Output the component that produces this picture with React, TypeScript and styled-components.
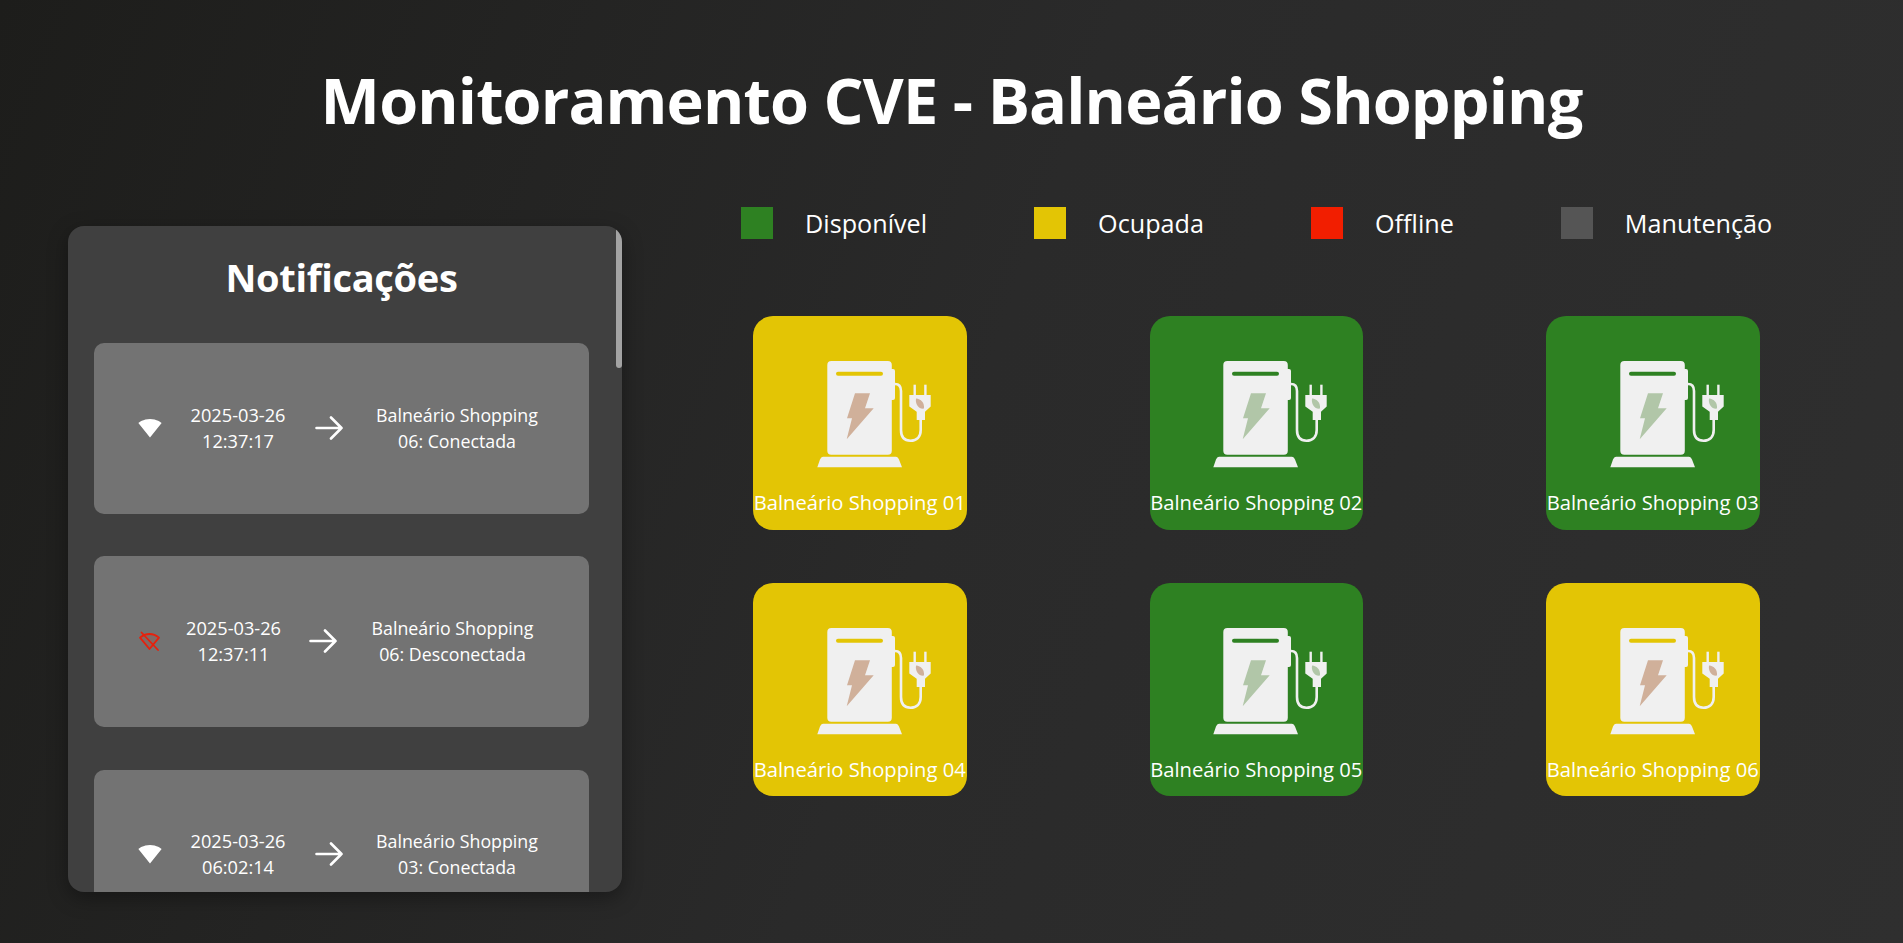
import React from "react";
import styled, { createGlobalStyle } from "styled-components";
import { MdSignalWifi4Bar } from "react-icons/md";

const Global = createGlobalStyle`
  html, body { margin: 0; padding: 0; height: 100%; overflow: hidden; }
  body {
    background: linear-gradient(110deg, #1d1d1b 0%, #2a2a2a 50%, #2f2f2f 100%);
    font-family: "Open Sans", "Noto Sans", sans-serif;
    color: #fff;
  }
`;

const Page = styled.div`
  width: 1903px;
  height: 943px;
  overflow: hidden;
`;

const Title = styled.h1`
  margin: 60px 0 67px;
  height: 80px;
  line-height: 80px;
  font-size: 63px;
  font-weight: 700;
  letter-spacing: -0.88px;
  text-align: center;
  white-space: nowrap;
`;

const Content = styled.div`
  display: flex;
  align-items: flex-start;
  padding-left: 68px;
`;

const Panel = styled.aside`
  position: relative;
  box-sizing: border-box;
  width: 554px;
  height: 666px;
  margin-top: 19px;
  padding-left: 26px;
  background: #404040;
  border-radius: 16px;
  box-shadow: 0 6px 20px rgba(0, 0, 0, 0.35);
  overflow: hidden;
`;

const ScrollThumb = styled.div`
  position: absolute;
  top: 0;
  right: 0;
  width: 6px;
  height: 142px;
  background: #a3a3a3;
  border-radius: 3px;
`;

const PanelTitle = styled.h2`
  margin: 0;
  padding-top: 25px;
  height: 117px;
  box-sizing: border-box;
  line-height: 52px;
  font-size: 38px;
  font-weight: 700;
  letter-spacing: -0.3px;
  text-align: center;
  width: 495px;
`;

const Notice = styled.div`
  display: flex;
  align-items: center;
  width: 495px;
  height: 171px;
  margin-bottom: 42.4px;
  padding: 0 0 2px 44px;
  box-sizing: border-box;
  background: #737373;
  border-radius: 10px;
`;

const SignalSlot = styled.div`
  display: flex;
  width: 24px;
  height: 24px;
  flex: none;
  color: #fff;
`;

const Stamp = styled.div<{ $off?: boolean }>`
  width: 100px;
  margin-left: ${(p) => (p.$off ? 21.5 : 26)}px;
  flex: none;
  font-size: 18.2px;
  line-height: 26px;
  text-align: center;
  white-space: nowrap;
`;

const ArrowIcon = styled.svg<{ $off?: boolean }>`
  width: 28px;
  height: 24px;
  flex: none;
  margin-left: ${(p) => (p.$off ? 25 : 27)}px;
`;

const Message = styled.div<{ $off?: boolean }>`
  width: 170px;
  margin-left: ${(p) => (p.$off ? 31 : 29)}px;
  flex: none;
  font-size: 17.8px;
  line-height: 26px;
  text-align: center;
  white-space: nowrap;
`;

const Main = styled.main`
  margin-left: 119px;
  width: 1040px;
`;

const Legend = styled.div`
  display: flex;
  align-items: center;
  gap: 107px;
  height: 32px;
`;

const LegendItem = styled.div`
  display: flex;
  align-items: center;
  gap: 32px;
  font-size: 25.2px;
  white-space: nowrap;
`;

const Swatch = styled.span<{ $color: string }>`
  width: 32px;
  height: 32px;
  background: ${(p) => p.$color};
`;

const Grid = styled.div`
  display: grid;
  grid-template-columns: repeat(3, 213.5px);
  column-gap: 183px;
  row-gap: 53px;
  margin: 77px 0 0 12px;
`;

const Station = styled.div<{ $color: string }>`
  display: flex;
  flex-direction: column;
  align-items: center;
  box-sizing: border-box;
  width: 213.5px;
  height: 213.5px;
  padding-top: 29px;
  background: ${(p) => p.$color};
  border-radius: 20px;
`;

const StationIcon = styled.svg`
  display: block;
  width: 150px;
  height: 144px;
  flex: none;
`;

const StationName = styled.div`
  font-size: 20.2px;
  line-height: 26px;
  white-space: nowrap;
`;

const COLORS = { free: "#2e8122", busy: "#e3c505", off: "#f21e00", service: "#555555" };
const BOLT = { free: "#b1c6a8", busy: "#d0b09a" };

const Charger = ({ state }: { state: "free" | "busy" }) => (
  <StationIcon viewBox="0 0 150 144">
    <rect x="42.3" y="16" width="64.5" height="93.7" rx="4" fill="#f0f0f0" />
    <rect x="100" y="24" width="10" height="31" rx="2" fill="#f0f0f0" />
    <rect x="51" y="26.7" width="47" height="4" rx="2" fill={COLORS[state]} />
    <path d="M70 48.3H85L80 63.3H88.7L61.7 94.3L67 73.3H62Z" fill={BOLT[state]} />
    <path d="M38 111.7H111Q113 111.7 114 114.5L117 122.3H32.3L35 114.5Q36 111.7 38 111.7Z" fill="#f0f0f0" />
    <path d="M110 39Q116 39 116 46V85C116 92 119.5 95.7 125.5 95.7S135.7 92 135.7 85V73" fill="none" stroke="#f0f0f0" strokeWidth="2.6" />
    <rect x="128.5" y="39.7" width="2.4" height="12" fill="#f0f0f0" />
    <rect x="139.2" y="39.7" width="2.4" height="12" fill="#f0f0f0" />
    <path d="M124.3 50H145.7V61.5L140 66.7V75H131.7V66.7L124.3 61.5Z" fill="#f0f0f0" />
    <path d="M131 53.5C136 54 139.5 57.5 139 63.5C134.5 64.5 130 60 131 53.5Z" fill={BOLT[state]} />
  </StationIcon>
);

const WifiOff = () => (
  <svg width="24" height="24" viewBox="0 0 24 24" fill="none">
    <path d="M11.5 20L2 8.6C4.5 6.5 8 5 11.5 5S18.5 6.5 21 8.6Z" fill="rgba(242,30,0,0.12)" stroke="#e8200c" strokeWidth="1.8" strokeLinejoin="round" />
    <path d="M3.5 3.5L20 21" stroke="#e8200c" strokeWidth="1.8" strokeLinecap="round" />
  </svg>
);

const Arrow = ({ off }: { off?: boolean }) => (
  <ArrowIcon $off={off} viewBox="0 0 28 24" fill="none">
    <path d="M1.5 12H26.5M16 1.5L26.5 12L16 22.5" stroke="#fff" strokeWidth="2.6" strokeLinecap="round" strokeLinejoin="round" />
  </ArrowIcon>
);

const NOTICES = [
  { date: "2025-03-26", time: "12:37:17", station: "06", off: false },
  { date: "2025-03-26", time: "12:37:11", station: "06", off: true },
  { date: "2025-03-26", time: "06:02:14", station: "03", off: false },
];

const LEGEND = [
  { label: "Disponível", color: COLORS.free },
  { label: "Ocupada", color: COLORS.busy },
  { label: "Offline", color: COLORS.off },
  { label: "Manutenção", color: COLORS.service },
];

const STATIONS: { name: string; state: "free" | "busy" }[] = [
  { name: "Balneário Shopping 01", state: "busy" },
  { name: "Balneário Shopping 02", state: "free" },
  { name: "Balneário Shopping 03", state: "free" },
  { name: "Balneário Shopping 04", state: "busy" },
  { name: "Balneário Shopping 05", state: "free" },
  { name: "Balneário Shopping 06", state: "busy" },
];

export default function App() {
  return (
    <Page>
      <Global />
      <Title>Monitoramento CVE - Balneário Shopping</Title>
      <Content>
        <Panel>
          <ScrollThumb />
          <PanelTitle>Notificações</PanelTitle>
          {NOTICES.map((n) => (
            <Notice key={n.date + n.time}>
              <SignalSlot>
                {n.off ? <WifiOff /> : <MdSignalWifi4Bar size={24} />}
              </SignalSlot>
              <Stamp $off={n.off}>
                {n.date}
                <br />
                {n.time}
              </Stamp>
              <Arrow off={n.off} />
              <Message $off={n.off}>
                Balneário Shopping
                <br />
                {n.station}: {n.off ? "Desconectada" : "Conectada"}
              </Message>
            </Notice>
          ))}
        </Panel>
        <Main>
          <Legend>
            {LEGEND.map((l) => (
              <LegendItem key={l.label}>
                <Swatch $color={l.color} />
                {l.label}
              </LegendItem>
            ))}
          </Legend>
          <Grid>
            {STATIONS.map((s) => (
              <Station key={s.name} $color={COLORS[s.state]}>
                <Charger state={s.state} />
                <StationName>{s.name}</StationName>
              </Station>
            ))}
          </Grid>
        </Main>
      </Content>
    </Page>
  );
}
